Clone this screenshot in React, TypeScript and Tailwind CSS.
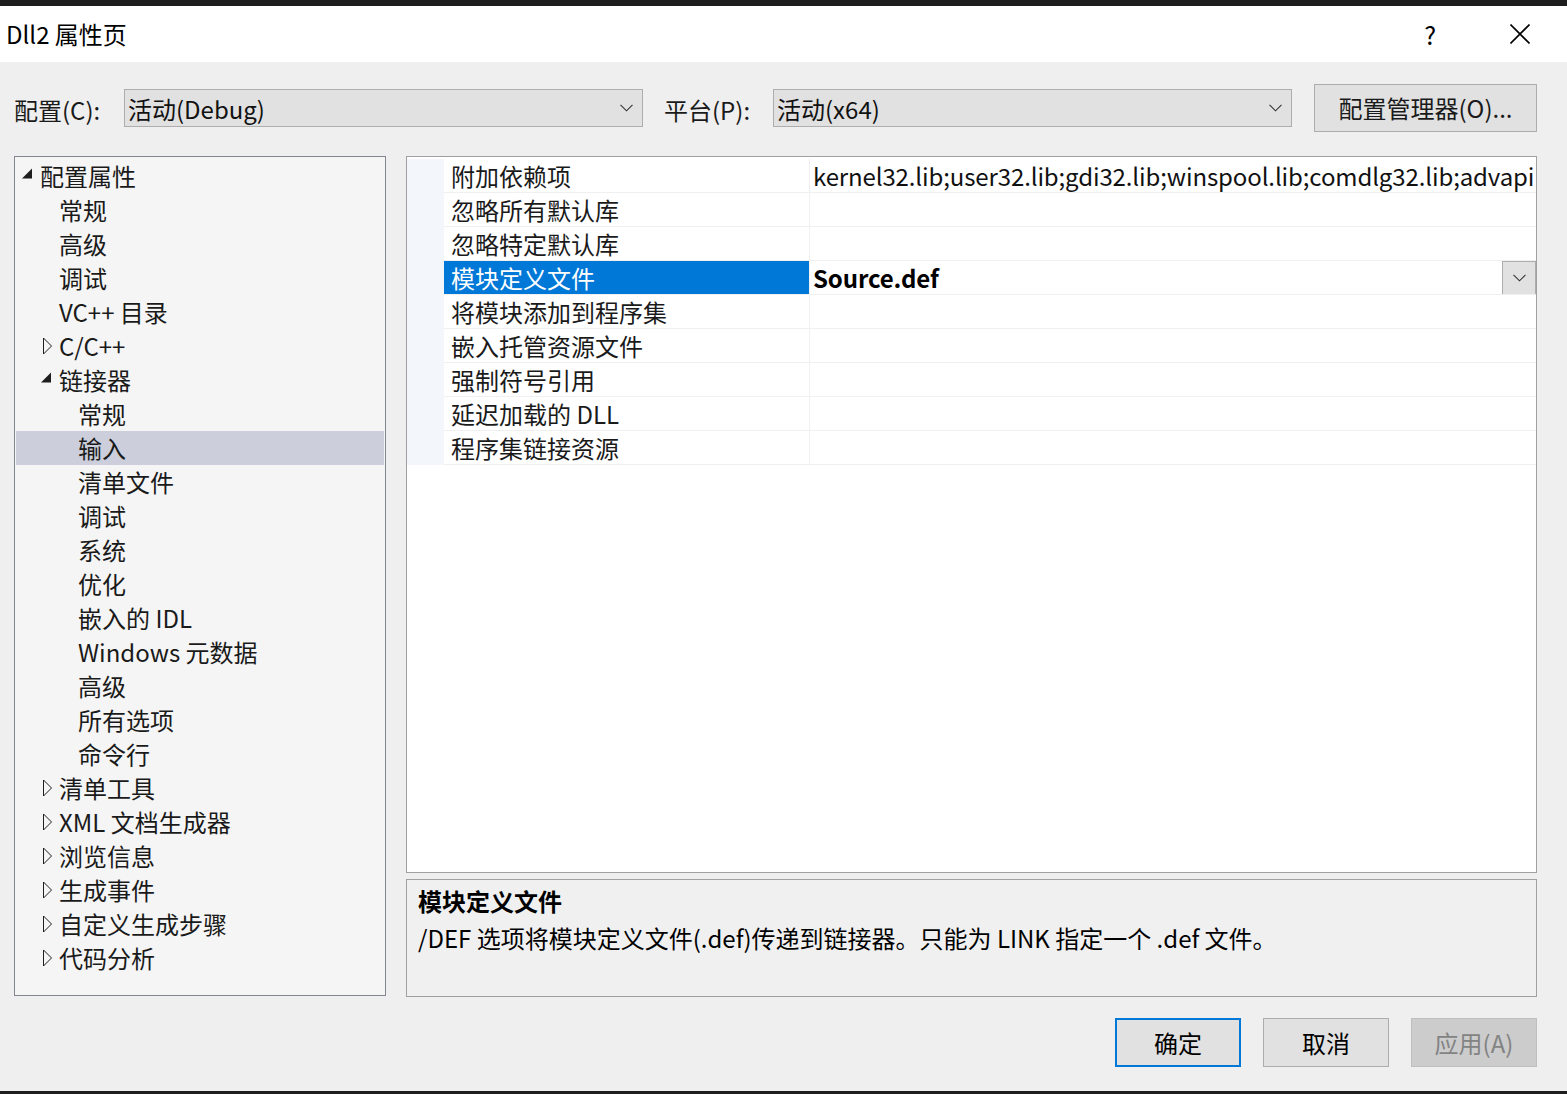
import React from 'react';

const FONT = { fontFamily: '"Noto Sans CJK SC", "Noto Sans", sans-serif' };

interface TreeNode {
  label: string;
  level: number;
  arrow?: 'open' | 'closed';
  selected?: boolean;
}

const tree: TreeNode[] = [
  { label: '配置属性', level: 0, arrow: 'open' },
  { label: '常规', level: 1 },
  { label: '高级', level: 1 },
  { label: '调试', level: 1 },
  { label: 'VC++ 目录', level: 1 },
  { label: 'C/C++', level: 1, arrow: 'closed' },
  { label: '链接器', level: 1, arrow: 'open' },
  { label: '常规', level: 2 },
  { label: '输入', level: 2, selected: true },
  { label: '清单文件', level: 2 },
  { label: '调试', level: 2 },
  { label: '系统', level: 2 },
  { label: '优化', level: 2 },
  { label: '嵌入的 IDL', level: 2 },
  { label: 'Windows 元数据', level: 2 },
  { label: '高级', level: 2 },
  { label: '所有选项', level: 2 },
  { label: '命令行', level: 2 },
  { label: '清单工具', level: 1, arrow: 'closed' },
  { label: 'XML 文档生成器', level: 1, arrow: 'closed' },
  { label: '浏览信息', level: 1, arrow: 'closed' },
  { label: '生成事件', level: 1, arrow: 'closed' },
  { label: '自定义生成步骤', level: 1, arrow: 'closed' },
  { label: '代码分析', level: 1, arrow: 'closed' },
];

const props = [
  { name: '附加依赖项', value: 'kernel32.lib;user32.lib;gdi32.lib;winspool.lib;comdlg32.lib;advapi' },
  { name: '忽略所有默认库', value: '' },
  { name: '忽略特定默认库', value: '' },
  { name: '模块定义文件', value: 'Source.def', active: true },
  { name: '将模块添加到程序集', value: '' },
  { name: '嵌入托管资源文件', value: '' },
  { name: '强制符号引用', value: '' },
  { name: '延迟加载的 DLL', value: '' },
  { name: '程序集链接资源', value: '' },
];

const Chevron = () => (
  <svg width="13" height="8" viewBox="0 0 13 8" className="shrink-0">
    <path d="M0.5 0.8 L6.5 6.8 L12.5 0.8" fill="none" stroke="#333" strokeWidth="1.1" />
  </svg>
);

const Arrow = ({ kind }: { kind?: 'open' | 'closed' }) => (
  <svg width="19" height="34" viewBox="0 0 19 34" className="shrink-0">
    {kind === 'open' && <path d="M11 9.5 L11 19.5 L1 19.5 Z" fill="#1e1e1e" />}
    {kind === 'closed' && <path d="M3.5 9 L11.5 17 L3.5 25 Z" fill="none" stroke="#1e1e1e" strokeWidth="1" />}
  </svg>
);

const Combo = ({ text }: { text: string }) => (
  <div className="w-[519px] h-[38px] flex items-center justify-between bg-[#e1e1e1] border border-[#adadad] pl-[3px] pr-[9px]">
    <span className="text-[24px] leading-none text-[#111] mt-[2px]">{text}</span>
    <Chevron />
  </div>
);

export default function App() {
  return (
    <div style={FONT} className="w-[1567px] h-[1094px] flex flex-col bg-[#efefef] overflow-hidden text-[#1a1a1a]">
      <div className="h-[6px] bg-[#1e1e1e]" />
      <div className="h-[56px] bg-white flex items-center justify-between pl-[6px] pr-[37px]">
        <span className="text-[24px] leading-none text-black">Dll2 属性页</span>
        <div className="flex items-center gap-[74px]">
          <span className="text-[25px] leading-none text-black">?</span>
          <svg width="20" height="20" viewBox="0 0 20 20">
            <path d="M0.5 0.5 L19.5 19.5 M19.5 0.5 L0.5 19.5" stroke="#000" strokeWidth="1.6" />
          </svg>
        </div>
      </div>

      <div className="flex-1 flex flex-col pl-[14px] pr-[30px]">
        <div className="mt-[22px] h-[48px] flex items-center">
          <span className="w-[110px] text-[24px] leading-none mt-[3px]">配置(C):</span>
          <Combo text="活动(Debug)" />
          <span className="ml-[21px] w-[109px] text-[24px] leading-none mt-[3px]">平台(P):</span>
          <Combo text="活动(x64)" />
          <div className="ml-[22px] w-[223px] h-[48px] flex items-center justify-center bg-[#e1e1e1] border border-[#adadad] text-[24px] leading-none">
            配置管理器(O)...
          </div>
        </div>

        <div className="mt-[24px] flex gap-[20px]">
          <div className="w-[372px] shrink-0 h-[840px] border border-[#828790] bg-[#f5f5f5] pt-[2px] px-[1px]">
            {tree.map((n, i) => (
              <div
                key={i}
                className={`h-[34px] flex items-center ${n.selected ? 'bg-[#cccedb]' : ''}`}
                style={{ paddingLeft: 5 + n.level * 19 }}
              >
                <Arrow kind={n.arrow} />
                <span className="text-[24px] leading-none whitespace-nowrap">{n.label}</span>
              </div>
            ))}
          </div>

          <div className="flex-1 min-w-0 flex flex-col gap-[6px]">
            <div className="h-[717px] border border-[#a0a0a0] bg-white flex pt-[2px] overflow-hidden">
              <div className="w-[37px] shrink-0 h-[306px] bg-[#f3f6fb]" />
              <div className="flex-1 min-w-0 flex flex-col">
                {props.map((p, i) => (
                  <div key={i} className="h-[34px] flex border-b border-[#f0f0f0]">
                    <div
                      className={`w-[366px] shrink-0 flex items-center pl-[7px] border-r border-[#f0f0f0] ${
                        p.active ? 'bg-[#0078d7] text-white' : ''
                      }`}
                    >
                      <span className="text-[24px] leading-none whitespace-nowrap">{p.name}</span>
                    </div>
                    <div className="flex-1 min-w-0 flex items-center pl-[3px] overflow-hidden">
                      <span className={`flex-1 whitespace-nowrap text-[24px] leading-none tracking-[-0.12px] ${p.active ? 'font-bold text-black' : 'text-[#111]'}`}>
                        {p.value}
                      </span>
                      {p.active && (
                        <div className="w-[34px] h-[34px] shrink-0 flex items-center justify-center bg-[#e1e1e1] border border-[#adadad]">
                          <Chevron />
                        </div>
                      )}
                    </div>
                  </div>
                ))}
              </div>
            </div>
            <div className="h-[118px] border border-[#a0a0a0] bg-[#f0f0f0] px-[11px] pt-[9px] flex flex-col gap-[13px]">
              <span className="text-[24px] leading-none font-bold text-black">模块定义文件</span>
              <span className="text-[24px] leading-none text-black">
                /DEF 选项将模块定义文件(.def)传递到链接器。只能为 LINK 指定一个 .def 文件。
              </span>
            </div>
          </div>
        </div>

        <div className="mt-[21px] h-[49px] flex justify-end gap-[22px]">
          <div className="w-[126px] h-[49px] flex items-center justify-center bg-[#e1e1e1] border-2 border-[#0078d7] text-[24px] leading-none text-black">确定</div>
          <div className="w-[126px] h-[49px] flex items-center justify-center bg-[#e1e1e1] border border-[#adadad] text-[24px] leading-none text-black">取消</div>
          <div className="w-[126px] h-[49px] flex items-center justify-center bg-[#cccccc] border border-[#bfbfbf] text-[24px] leading-none text-[#838383]">应用(A)</div>
        </div>
      </div>
      <div className="h-[3px] bg-[#1e1e1e]" />
    </div>
  );
}
